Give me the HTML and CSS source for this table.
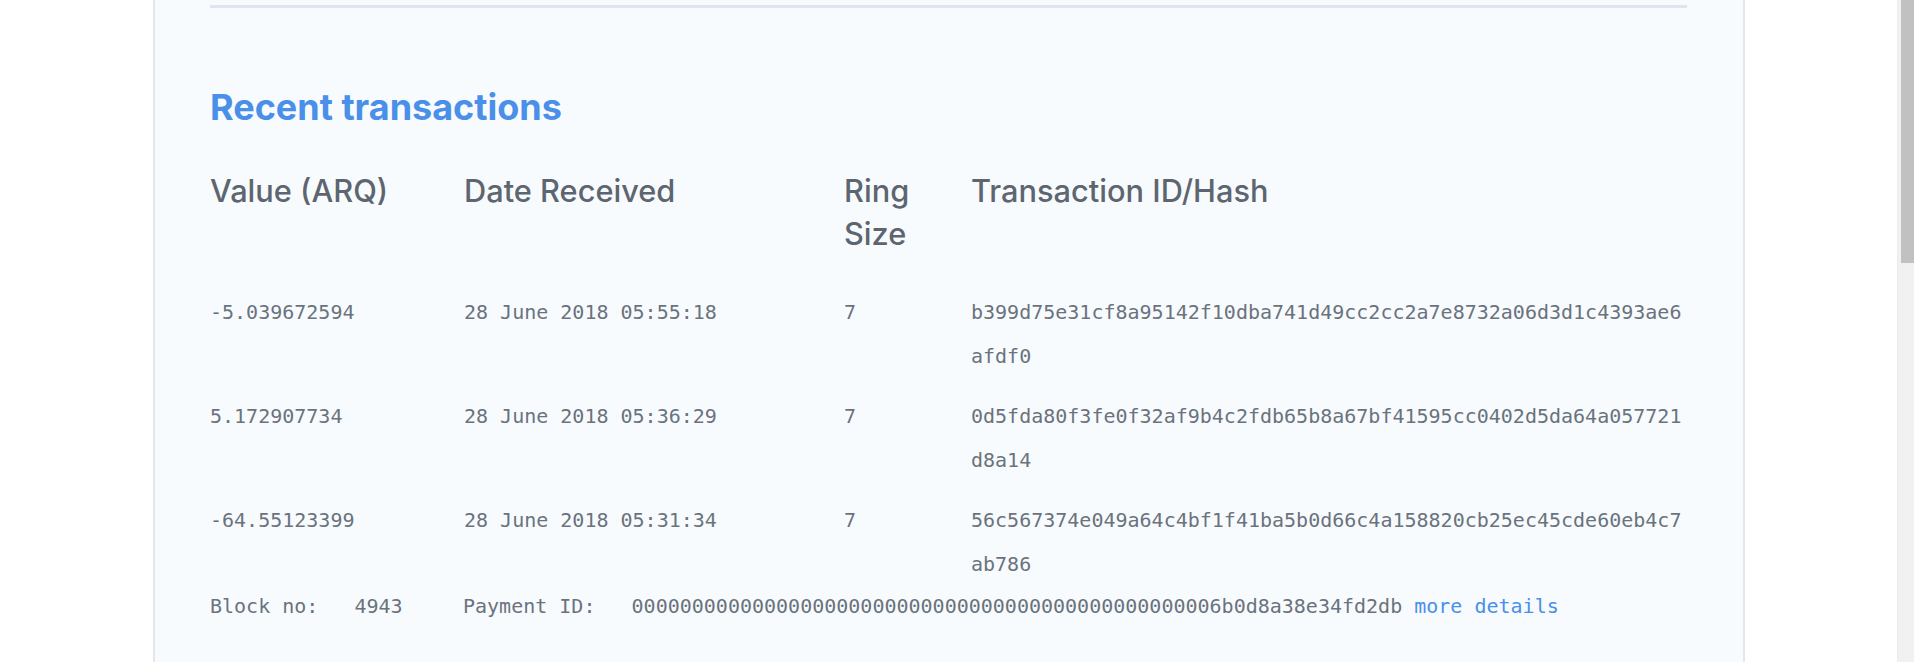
FILE: index.html
```html
<!DOCTYPE html>
<html lang="en">
<head>
<meta charset="utf-8">
<title>Recent transactions</title>
<link rel="stylesheet" href="styles.css">
</head>
<body>
<div class="page">
  <main class="card">
    <hr class="rule">
    <h2 class="title">Recent transactions</h2>
    <div class="grid head">
      <div class="hcell">Value (ARQ)</div>
      <div class="hcell">Date Received</div>
      <div class="hcell">Ring Size</div>
      <div class="hcell">Transaction ID/Hash</div>
    </div>
    <div class="grid row">
      <div class="cell">-5.039672594</div>
      <div class="cell">28 June 2018 05:55:18</div>
      <div class="cell">7</div>
      <div class="cell hash">b399d75e31cf8a95142f10dba741d49cc2cc2a7e8732a06d3d1c4393ae6afdf0</div>
    </div>
    <div class="grid row">
      <div class="cell">5.172907734</div>
      <div class="cell">28 June 2018 05:36:29</div>
      <div class="cell">7</div>
      <div class="cell hash">0d5fda80f3fe0f32af9b4c2fdb65b8a67bf41595cc0402d5da64a057721d8a14</div>
    </div>
    <div class="grid row">
      <div class="cell">-64.55123399</div>
      <div class="cell">28 June 2018 05:31:34</div>
      <div class="cell">7</div>
      <div class="cell hash">56c567374e049a64c4bf1f41ba5b0d66c4a158820cb25ec45cde60eb4c7ab786</div>
    </div>
    <div class="grid meta">
      <div class="cell pre">Block no:   4943</div>
      <div class="cell pre wide">Payment ID:   0000000000000000000000000000000000000000000000006b0d8a38e34fd2db <a class="link" href="#">more details</a></div>
    </div>
  </main>
</div>
<div class="scrollbar"><div class="thumb"></div></div>
</body>
</html>
```
FILE: styles.css
```css
html, body {
  margin: 0;
  padding: 0;
  height: 100%;
  overflow: hidden;
}
body {
  display: flex;
  background: #ffffff;
}
.page {
  flex: 1;
  display: flex;
  padding-left: 153px;
  height: 662px;
}
.card {
  width: 1592px;
  height: 662px;
  box-sizing: border-box;
  background: #f8fbfe;
  border-left: 2px solid #e1e7ef;
  border-right: 2px solid #e1e7ef;
  padding: 5px 56px 0 55px;
  flex: none;
}
.rule {
  margin: 0;
  border: 0;
  height: 3px;
  background: #dee5ee;
}
.title {
  margin: 77px 0 39px 0;
  font-family: Inter, Lato, sans-serif;
  font-weight: 700;
  font-size: 36px;
  line-height: 44px;
  color: #4a8fe8;
}
.grid {
  display: grid;
  grid-template-columns: 254px 380px 127px 1fr;
}
.head {
  margin-bottom: 20px;
}
.hcell {
  font-family: Inter, Lato, sans-serif;
  font-weight: 500;
  font-size: 30.75px;
  line-height: 43px;
  padding-top: 1px;
  margin-bottom: -1px;
  color: #5d6670;
  padding-right: 20px;
}
.row {
  padding-top: 16px;
}
.cell {
  font-family: "DejaVu Sans Mono", "Liberation Mono", monospace;
  font-size: 20px;
  line-height: 44px;
  color: #6a737d;
}
.hash {
  word-break: break-all;
}
.meta .cell {
  line-height: 40px;
}
.pre {
  white-space: pre;
}
.wide {
  grid-column: 2 / 5;
  margin-left: -1px;
}
.link {
  color: #4a8fe8;
  text-decoration: none;
}
.scrollbar {
  width: 17px;
  flex: none;
  height: 662px;
  background: #f1f1f1;
  border-left: 1px solid #ececec;
  box-sizing: border-box;
  display: flex;
  justify-content: flex-end;
}
.thumb {
  width: 13px;
  height: 263px;
  background: #c1c1c1;
}
```
